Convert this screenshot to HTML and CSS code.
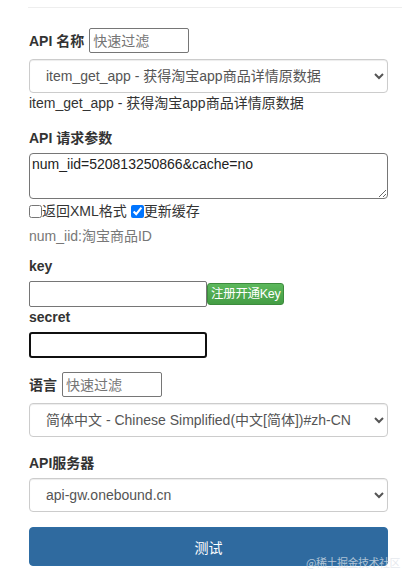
FILE: index.html
```html
<!DOCTYPE html>
<html lang="zh-CN">
<head>
<meta charset="utf-8">
<link rel="stylesheet" href="styles.css">
</head>
<body>
<div class="page">
  <hr class="rule">
  <div class="filter-row api-row">
    <label class="lbl">API 名称</label>
    <input class="filter" type="text" placeholder="快速过滤">
  </div>
  <select class="form-control sel-api">
    <option>item_get_app - 获得淘宝app商品详情原数据</option>
  </select>
  <div class="desc">item_get_app - 获得淘宝app商品详情原数据</div>

  <label class="lbl block params-lbl">API 请求参数</label>
  <textarea class="params">num_iid=520813250866&amp;cache=no</textarea>
  <div class="checks">
    <input type="checkbox" class="cb"><span>返回XML格式</span>
    <input type="checkbox" class="cb cb2" checked><span>更新缓存</span>
  </div>
  <div class="hint">num_iid:淘宝商品ID</div>

  <label class="lbl block key-lbl">key</label>
  <div class="key-row">
    <input class="plain" type="text">
    <button class="btn-green" type="button">注册开通Key</button>
  </div>
  <label class="lbl block secret-lbl">secret</label>
  <input class="plain focused" type="text">

  <div class="filter-row lang-row">
    <label class="lbl">语言</label>
    <input class="filter" type="text" placeholder="快速过滤">
  </div>
  <select class="form-control sel-lang">
    <option>简体中文 - Chinese Simplified(中文[简体])#zh-CN</option>
  </select>

  <label class="lbl block server-lbl">API服务器</label>
  <select class="form-control sel-server">
    <option>api-gw.onebound.cn</option>
  </select>

  <button class="btn-test" type="button">测试</button>
  <div class="watermark">@稀土掘金技术社区</div>
</div>
</body>
</html>
```

FILE: styles.css
```css
html, body {
  margin: 0;
  padding: 0;
  background: #fff;
}
body {
  font-family: "Liberation Sans", Arial, "Noto Sans CJK SC", sans-serif;
  font-size: 14px;
  line-height: 20px;
  color: #333;
  overflow: hidden;
}
.page {
  position: relative;
  padding: 0 14px 0 29px;
  height: 569px;
  box-sizing: border-box;
}
.rule {
  margin: 7px -14px 0 -1px;
  border: 0;
  border-top: 1px solid #eee;
  height: 0;
}
.lbl {
  font-weight: bold;
  color: #333;
}
.block {
  display: block;
}
.filter-row {
  display: flex;
  align-items: center;
  gap: 5px;
}
.api-row {
  margin-top: 20px;
}
.filter {
  width: 100px;
  height: 25px;
  box-sizing: border-box;
  border: 1px solid #767676;
  border-radius: 2px;
  padding: 1px 3px;
  font: 14px "Liberation Sans", "Noto Sans CJK SC", sans-serif;
  color: #333;
}
.filter::placeholder {
  color: #757575;
}
.form-control {
  display: block;
  width: 100%;
  height: 34px;
  box-sizing: border-box;
  border: 1px solid #ccc;
  border-radius: 4px;
  background: #fff;
  padding: 6px 12px;
  font: 14px "Liberation Sans", "Noto Sans CJK SC", sans-serif;
  color: #555;
  box-shadow: inset 0 1px 1px rgba(0,0,0,.075);
}
.sel-api {
  margin-top: 6px;
}
.desc {
  height: 20px;
}
.params-lbl {
  margin-top: 15px;
  height: 20px;
}
.params {
  display: block;
  width: 100%;
  height: 46px;
  box-sizing: border-box;
  margin-top: 5px;
  border: 1px solid #767676;
  border-radius: 4px;
  padding: 2px 2px;
  font: 14px "Liberation Sans", "Noto Sans CJK SC", sans-serif;
  color: #222;
  resize: vertical;
}
.checks {
  display: flex;
  align-items: center;
  height: 24px;
}
.cb {
  margin: 0;
  width: 13px;
  height: 13px;
}
.cb2 {
  margin-left: 4px;
}
.hint {
  color: #777;
  margin-top: 3px;
  height: 20px;
}
.key-lbl {
  margin-top: 10px;
  height: 20px;
}
.key-row {
  display: flex;
  align-items: center;
  margin-top: 5px;
}
.plain {
  display: block;
  width: 178px;
  height: 26px;
  box-sizing: border-box;
  border: 1px solid #767676;
  border-radius: 2px;
  padding: 1px 3px;
  font: 14px "Liberation Sans", sans-serif;
}
.focused {
  border: 2px solid #101010;
  border-radius: 3px;
}
.btn-green {
  margin-left: 0;
  height: 22px;
  padding: 0 3px;
  border: 1px solid #3d8b3d;
  border-radius: 3px;
  background: linear-gradient(#5cb85c, #449d44);
  color: #fff;
  font: 12.5px "Liberation Sans", "Noto Sans CJK SC", sans-serif;
  letter-spacing: -0.3px;
  line-height: 20px;
}
.secret-lbl {
  margin-top: 0;
  height: 20px;
}
.secret-lbl + .plain {
  margin-top: 5px;
}
.lang-row {
  margin-top: 14px;
}
.sel-lang {
  margin-top: 6px;
}
.server-lbl {
  margin-top: 16px;
  height: 20px;
}
.sel-server {
  margin-top: 5px;
}
.btn-test {
  display: block;
  width: 100%;
  height: 39px;
  margin-top: 15px;
  border: 1px solid #2e6da4;
  border-radius: 4px;
  background: #2f6a9f;
  color: #fff;
  font: 14px "Liberation Sans", "Noto Sans CJK SC", sans-serif;
}
.watermark {
  position: absolute;
  right: 2px;
  bottom: 6px;
  font: 11px "Noto Sans CJK SC", sans-serif;
  color: rgba(220, 225, 232, 0.75);
  letter-spacing: -0.5px;
}
```
